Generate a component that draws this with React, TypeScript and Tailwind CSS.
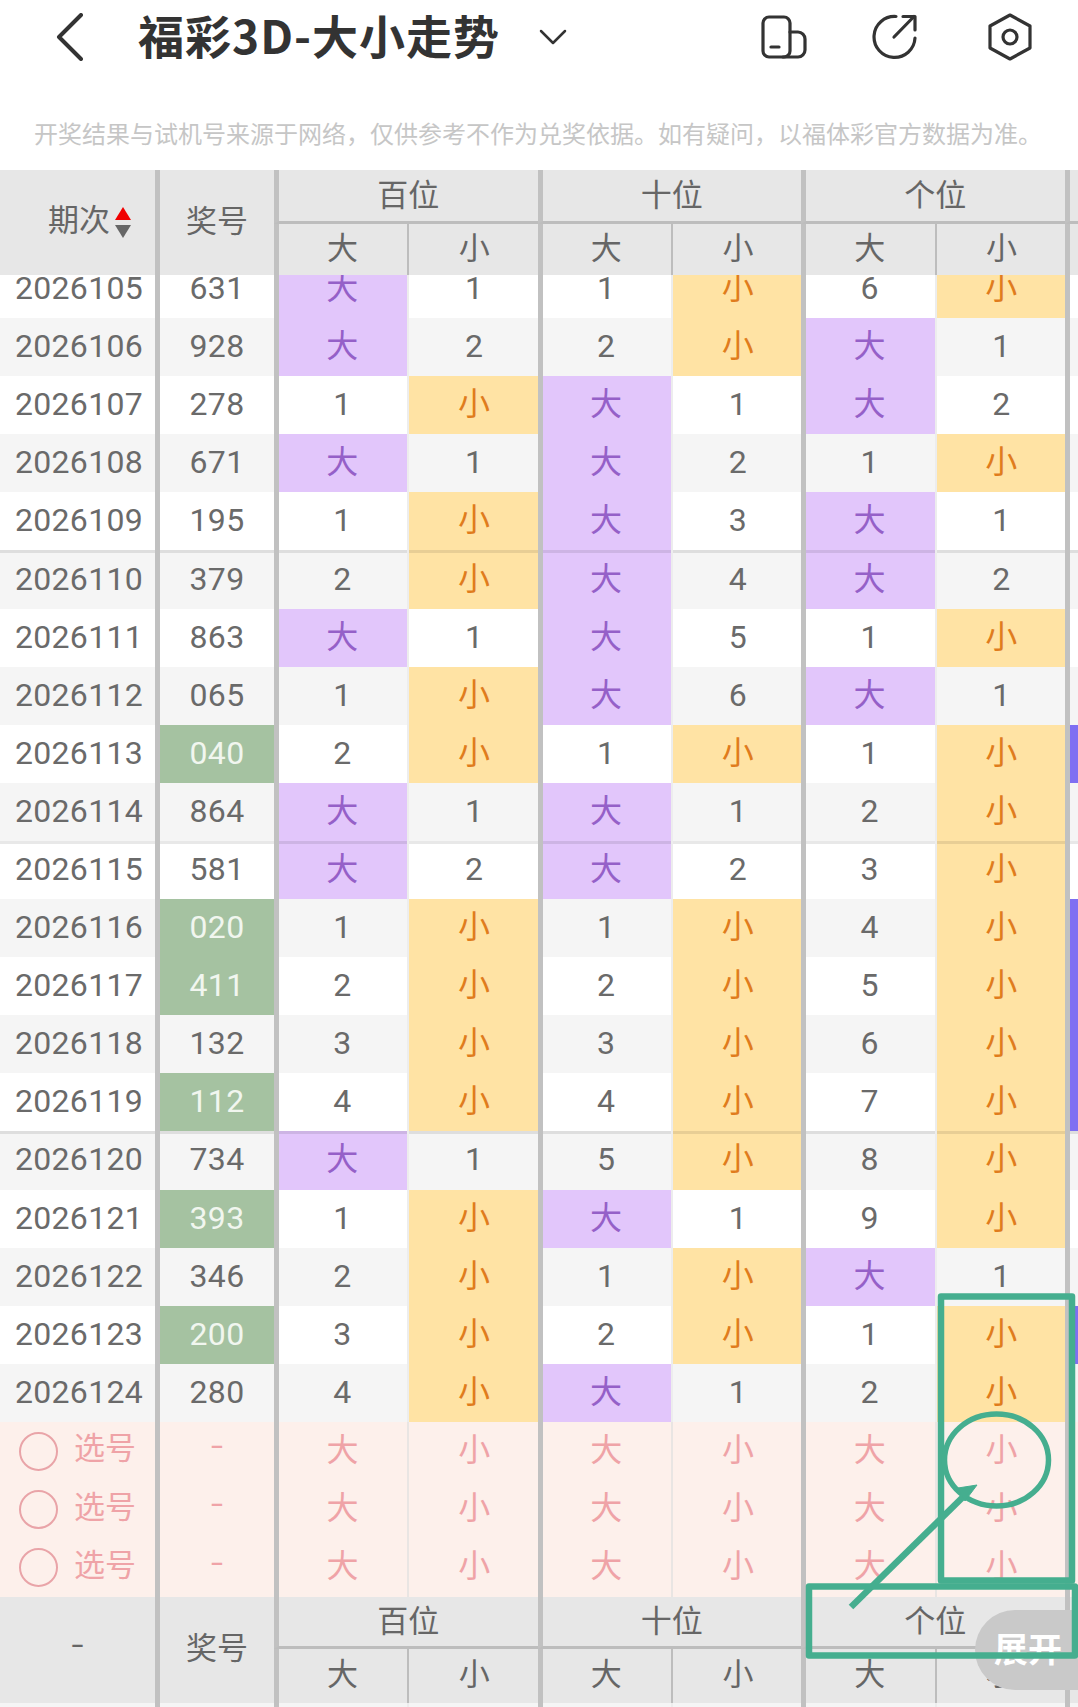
const columns = 'grid grid-cols-[155px_119px_133px_130.5px_133.5px_130px_133.5px_130px_1fr]'
const divider = 'border-l-[5px] border-[#c1c1c1]'

type Draw = {
  id: string
  num: string
  cells: string[]
  green?: boolean
  marked?: boolean
}

const draws: Draw[] = [
  { id: '2026105', num: '631', cells: ['大', '1', '1', '小', '6', '小'] },
  { id: '2026106', num: '928', cells: ['大', '2', '2', '小', '大', '1'] },
  { id: '2026107', num: '278', cells: ['1', '小', '大', '1', '大', '2'] },
  { id: '2026108', num: '671', cells: ['大', '1', '大', '2', '1', '小'] },
  { id: '2026109', num: '195', cells: ['1', '小', '大', '3', '大', '1'] },
  { id: '2026110', num: '379', cells: ['2', '小', '大', '4', '大', '2'] },
  { id: '2026111', num: '863', cells: ['大', '1', '大', '5', '1', '小'] },
  { id: '2026112', num: '065', cells: ['1', '小', '大', '6', '大', '1'] },
  { id: '2026113', num: '040', cells: ['2', '小', '1', '小', '1', '小'], green: true, marked: true },
  { id: '2026114', num: '864', cells: ['大', '1', '大', '1', '2', '小'] },
  { id: '2026115', num: '581', cells: ['大', '2', '大', '2', '3', '小'] },
  { id: '2026116', num: '020', cells: ['1', '小', '1', '小', '4', '小'], green: true, marked: true },
  { id: '2026117', num: '411', cells: ['2', '小', '2', '小', '5', '小'], green: true, marked: true },
  { id: '2026118', num: '132', cells: ['3', '小', '3', '小', '6', '小'], marked: true },
  { id: '2026119', num: '112', cells: ['4', '小', '4', '小', '7', '小'], green: true, marked: true },
  { id: '2026120', num: '734', cells: ['大', '1', '5', '小', '8', '小'] },
  { id: '2026121', num: '393', cells: ['1', '小', '大', '1', '9', '小'], green: true },
  { id: '2026122', num: '346', cells: ['2', '小', '1', '小', '大', '1'] },
  { id: '2026123', num: '200', cells: ['3', '小', '2', '小', '1', '小'], green: true, marked: true },
  { id: '2026124', num: '280', cells: ['4', '小', '大', '1', '2', '小'] },
]

function cellColor(value: string) {
  if (value === '大') return 'bg-[#e2c6fb] text-[#9560c8]'
  if (value === '小') return 'bg-[#ffe3a4] text-[#e07c1d]'
  return ''
}

function DrawRow({ draw, index }: { draw: Draw; index: number }) {
  const stripe = index % 2 === 1 ? 'bg-[#f5f5f5]' : 'bg-white'
  const fifth = Number(draw.id) % 5 === 0 ? 'shadow-[inset_0_3px_0_rgba(0,0,0,0.09)]' : ''
  const cell = `flex items-center justify-center pb-[2px] ${fifth}`

  return (
    <div className={`${columns} h-[58.1px] text-[32px] tracking-[0.3px] text-[#6a6a6a] ${stripe}`}>
      <div className={`${cell} pl-[3px]`}>{draw.id}</div>
      <div className={`${cell} ${divider} ${draw.green ? 'bg-[#a5c2a1] text-[#f1f6ef]' : ''}`}>{draw.num}</div>
      {draw.cells.map((value, i) => (
        <div
          key={i}
          className={`${cell} ${i % 2 === 0 ? `pr-[1px] ${divider}` : 'border-l-[2.5px] border-[#ededed] pl-[2px]'} ${cellColor(value)}`}
        >
          {value}
        </div>
      ))}
      <div className={`${divider} ${fifth} ${draw.marked ? 'bg-[#7f6ff2]' : ''}`} />
    </div>
  )
}

function PickRow() {
  const marks = ['大', '小', '大', '小', '大', '小']

  return (
    <div className={`${columns} h-[58.3px] bg-[#fdf0eb] text-[32px] text-[#efa3a7]`}>
      <div className="flex items-center gap-[16px] pl-[19px] text-[31px]">
        <span className="h-[39px] w-[39px] rounded-full border-2 border-[#e9a4a8]" />
        <span className="pb-[3px]">选号</span>
      </div>
      <div className={`flex items-center justify-center pb-[10px] text-[44px] leading-none font-light ${divider}`}>-</div>
      {marks.map((mark, i) => (
        <div
          key={i}
          className={`flex items-center justify-center pb-[3px] ${i % 2 === 0 ? `pr-[1px] ${divider}` : 'border-l-[2.5px] border-[#e9e5e3] pl-[2px]'}`}
        >
          {mark}
        </div>
      ))}
      <div className={divider} />
    </div>
  )
}

function SortArrows() {
  return (
    <svg width="16" height="31" viewBox="0 0 16 31" className="ml-[5px]">
      <path d="M8 0 L16 13 L0 13 Z" fill="#f00000" />
      <path d="M0 18 L16 18 L8 31 Z" fill="#666666" />
    </svg>
  )
}

function TableHead({ first, height, rows }: { first: React.ReactNode; height: string; rows: string }) {
  const groups = ['百位', '十位', '个位']

  return (
    <div className={`${columns} ${height} ${rows} bg-[#e7e7e7] text-[31px] text-[#666666]`}>
      <div className="row-span-2 flex items-center justify-center">{first}</div>
      <div className={`row-span-2 flex items-center justify-center pb-[1px] ${divider}`}>奖号</div>
      {groups.map((group) => (
        <div key={group} className={`col-span-2 flex items-center justify-center border-b-[3px] border-b-[#bdbdbd] pt-[1px] ${divider}`}>
          {group}
        </div>
      ))}
      <div className={`border-b-[3px] border-b-[#bdbdbd] ${divider}`} />
      {groups.map((group) => [
        <div key={`${group}-big`} className={`flex items-center justify-center pr-[1px] pb-[1px] ${divider}`}>大</div>,
        <div key={`${group}-small`} className="flex items-center justify-center border-l-[2.5px] border-[#bdbdbd] pb-[1px] pl-[2px]">小</div>,
      ])}
      <div className={divider} />
    </div>
  )
}

function TopBar() {
  return (
    <div className="flex h-[74px] items-center text-[#333333]">
      <svg width="28" height="48" viewBox="0 0 28 48" fill="none" stroke="#333333" strokeWidth="4" strokeLinecap="round" strokeLinejoin="round" className="ml-[56px]">
        <path d="M25 2 L3 24 L25 46" />
      </svg>
      <h1 className="ml-[54px] pb-[6px] text-[46px] leading-none font-bold tracking-[1px] font-['Noto_Sans_CJK_SC',sans-serif]">福彩3D-大小走势</h1>
      <svg width="28" height="16" viewBox="0 0 28 16" fill="none" stroke="#333333" strokeWidth="2.5" strokeLinecap="round" strokeLinejoin="round" className="ml-[39px]">
        <path d="M2 2 L14 14 L26 2" />
      </svg>
      <svg width="46" height="44" viewBox="0 0 46 44" fill="none" stroke="#333333" strokeWidth="3.2" strokeLinecap="round" strokeLinejoin="round" className="ml-[194px]">
        <rect x="2" y="2" width="27" height="40" rx="6" />
        <path d="M29 17 H37 a7 7 0 0 1 7 7 V35 a7 7 0 0 1 -7 7 H22" />
        <path d="M10 32 H18" />
      </svg>
      <svg width="46" height="46" viewBox="0 0 46 46" fill="none" stroke="#333333" strokeWidth="3.2" strokeLinecap="round" strokeLinejoin="round" className="ml-[65px]">
        <path d="M24 2.5 A20.5 20.5 0 1 0 43 24" />
        <path d="M22 23 L42 2.5" />
        <path d="M31 2.5 H43 V16" />
      </svg>
      <svg width="46" height="48" viewBox="0 0 46 48" fill="none" stroke="#333333" strokeWidth="3.2" strokeLinejoin="round" className="ml-[69px]">
        <path d="M23 2 L43 13 V35 L23 46 L3 35 V13 Z" />
        <circle cx="23" cy="24" r="7" />
      </svg>
    </div>
  )
}

function Annotations() {
  return (
    <svg width="1078" height="1707" viewBox="0 0 1078 1707" fill="none" stroke="#45ae8f" strokeLinejoin="round" className="pointer-events-none absolute top-0 left-0">
      <rect x="941" y="1296.5" width="131" height="284" strokeWidth="6.5" />
      <rect x="809" y="1586.5" width="266" height="69" strokeWidth="6.5" />
      <ellipse cx="996.5" cy="1460" rx="52" ry="46" strokeWidth="5.5" />
      <path d="M851 1607 L964 1496" strokeWidth="6.5" />
      <path d="M977 1485 L958 1488 L965 1501 Z" fill="#45ae8f" strokeWidth="1" />
    </svg>
  )
}

export default function App() {
  return (
    <div className="relative h-[1707px] w-[1078px] overflow-hidden bg-white font-['Roboto','Noto_Sans_CJK_SC',sans-serif]">
      <div className="h-[170px]">
        <TopBar />
        <p className="mt-[42px] pl-[34px] text-[24px] leading-[34px] whitespace-nowrap text-[#c6c6c6] font-['Noto_Sans_CJK_SC',sans-serif]">
          开奖结果与试机号来源于网络，仅供参考不作为兑奖依据。如有疑问，以福体彩官方数据为准。
        </p>
      </div>

      <TableHead
        height="h-[105px]"
        rows="grid-rows-[54px_1fr]"
        first={
          <div className="flex items-center pl-[24px]">
            <span className="pb-[2px]">期次</span>
            <SortArrows />
          </div>
        }
      />

      <div className="h-[1147px] overflow-hidden">
        <div className="-mt-[15px]">
          {draws.map((draw, i) => (
            <DrawRow key={draw.id} draw={draw} index={i} />
          ))}
        </div>
      </div>

      <PickRow />
      <PickRow />
      <PickRow />

      <TableHead
        height="h-[106px]"
        rows="grid-rows-[52px_1fr]"
        first={<span className="pb-[10px] text-[44px] leading-none font-light">-</span>}
      />
      <div className={`${columns} h-[5px] bg-[#f5f5f5]`}>
        <div />
        <div className={divider} />
        <div className={divider} />
        <div className="border-l-[2.5px] border-[#ededed]" />
        <div className={divider} />
        <div className="border-l-[2.5px] border-[#ededed]" />
        <div className={divider} />
        <div className="border-l-[2.5px] border-[#ededed]" />
        <div className={divider} />
      </div>

      <div className="absolute top-[1610px] left-[975px] flex h-[80px] w-[130px] items-center rounded-l-full bg-[#c9c9c9] pb-[4px] pl-[19px] text-[34px] leading-none font-bold text-white font-['Noto_Sans_CJK_SC',sans-serif]">
        展开
      </div>
      <Annotations />
    </div>
  )
}
